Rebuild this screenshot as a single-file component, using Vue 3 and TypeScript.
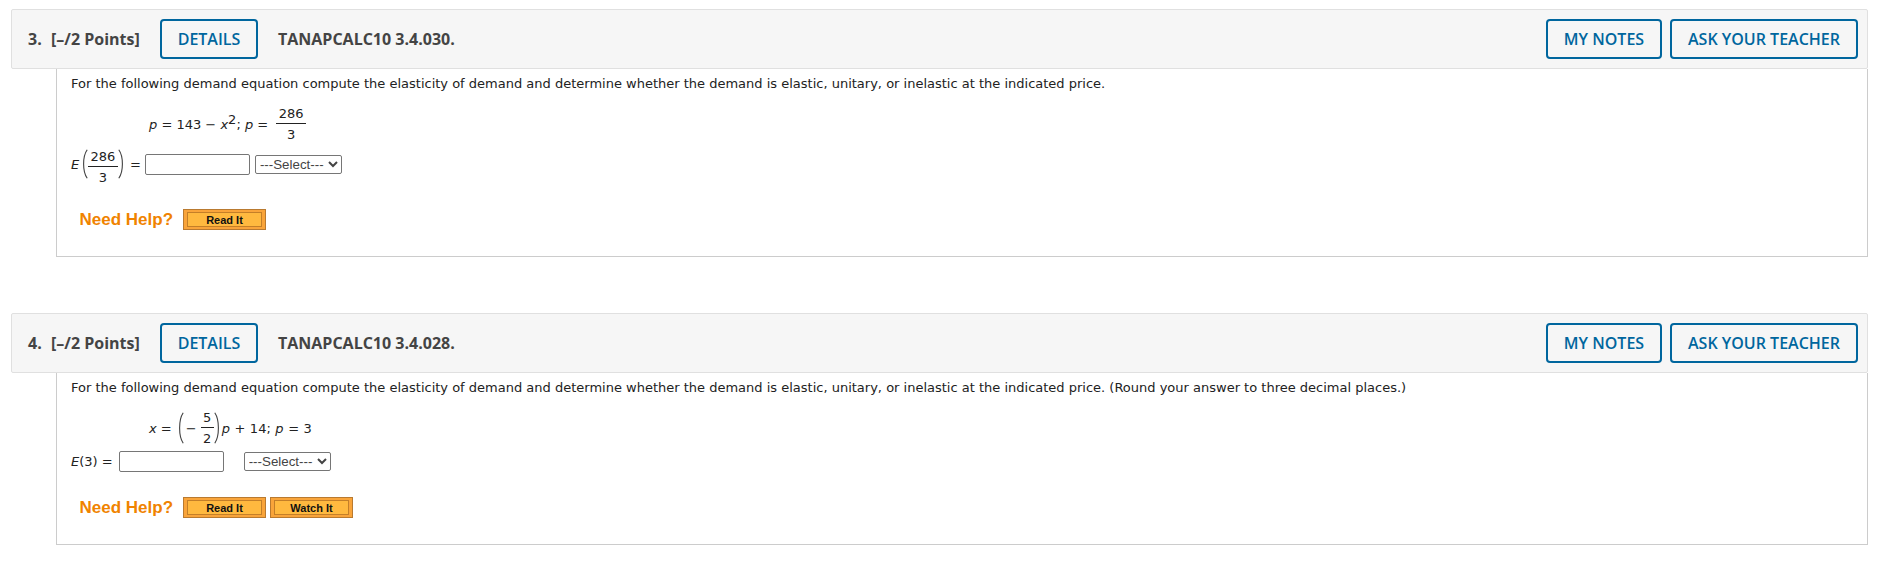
<script setup lang="ts">
const parenLeft = 'M9 1 C3 10 3 30 9 39'
const parenRight = 'M1 1 C7 10 7 30 1 39'
</script>

<template>
  <div class="page">
    <section class="question first">
      <header class="q-head">
        <span class="q-num">3.</span>
        <span class="q-points">[–/2 Points]</span>
        <button class="outline details">DETAILS</button>
        <span class="q-title">TANAPCALC10 3.4.030.</span>
        <button class="outline notes">MY NOTES</button>
        <button class="outline ask">ASK YOUR TEACHER</button>
      </header>
      <div class="q-body">
        <p class="prompt">For the following demand equation compute the elasticity of demand and determine whether the demand is elastic, unitary, or inelastic at the indicated price.</p>
        <div class="equation">
          <span><i>p</i>&nbsp;= 143 − <i>x</i><sup>2</sup>; <i>p</i>&nbsp;=</span>
          <span class="frac gap"><span>286</span><span>3</span></span>
        </div>
        <div class="answer">
          <i class="fn">E</i>
          <svg class="paren" width="8" height="30" viewBox="0 0 10 40" preserveAspectRatio="none"><path :d="parenLeft" /></svg>
          <span class="frac"><span>286</span><span>3</span></span>
          <svg class="paren" width="8" height="30" viewBox="0 0 10 40" preserveAspectRatio="none"><path :d="parenRight" /></svg>
          <span class="equals">=</span>
          <input class="num-input" type="text" />
          <select class="pick"><option>---Select---</option></select>
        </div>
        <div class="help">
          <span class="help-label">Need Help?</span>
          <button class="orange"><span>Read It</span></button>
        </div>
      </div>
    </section>

    <section class="question">
      <header class="q-head">
        <span class="q-num">4.</span>
        <span class="q-points">[–/2 Points]</span>
        <button class="outline details">DETAILS</button>
        <span class="q-title">TANAPCALC10 3.4.028.</span>
        <button class="outline notes">MY NOTES</button>
        <button class="outline ask">ASK YOUR TEACHER</button>
      </header>
      <div class="q-body second">
        <p class="prompt">For the following demand equation compute the elasticity of demand and determine whether the demand is elastic, unitary, or inelastic at the indicated price. (Round your answer to three decimal places.)</p>
        <div class="equation">
          <span><i>x</i>&nbsp;=</span>
          <svg class="paren open" width="8" height="32" viewBox="0 0 10 40" preserveAspectRatio="none"><path :d="parenLeft" /></svg>
          <span class="minus">−</span>
          <span class="frac small"><span>5</span><span>2</span></span>
          <svg class="paren" width="8" height="32" viewBox="0 0 10 40" preserveAspectRatio="none"><path :d="parenRight" /></svg>
          <span class="tail"><i>p</i>&nbsp;+ 14; <i>p</i>&nbsp;= 3</span>
        </div>
        <div class="answer plain">
          <span><i>E</i>(3) =</span>
          <input class="num-input" type="text" />
          <select class="pick spaced"><option>---Select---</option></select>
        </div>
        <div class="help close">
          <span class="help-label">Need Help?</span>
          <button class="orange"><span>Read It</span></button>
          <button class="orange"><span>Watch It</span></button>
        </div>
      </div>
    </section>
  </div>
</template>

<style>
html, body {
  background: #fff;
}
</style>

<style scoped>
.page {
  width: 1857px;
  padding: 9px 0 0 11px;
  font-family: "DejaVu Sans", Verdana, sans-serif;
  font-size: 13px;
  color: #222;
}

.first {
  margin-bottom: 56px;
}

.q-head {
  display: flex;
  align-items: center;
  height: 60px;
  box-sizing: border-box;
  padding: 0 9px 0 16px;
  background: #f6f6f6;
  border: 1px solid #e0e0e0;
  border-radius: 2px;
  font-family: "Open Sans", sans-serif;
  font-weight: 700;
  font-size: 16px;
  color: #444;
}

.q-num {
  width: 23px;
}

.q-points {
  width: 109px;
}

.q-title {
  margin-left: 20px;
  margin-right: auto;
}

.outline {
  height: 40px;
  box-sizing: border-box;
  background: transparent;
  border: 2px solid #00669e;
  border-radius: 4px;
  color: #00669e;
  font-family: "Open Sans", sans-serif;
  font-weight: 600;
  font-size: 16px;
  padding: 0;
}

.details {
  width: 98px;
}

.notes {
  width: 116px;
  margin-right: 8px;
}

.ask {
  width: 188px;
}

.q-body {
  margin-left: 45px;
  height: 188px;
  box-sizing: border-box;
  padding: 7px 14px 0;
  border: 1px solid #ccc;
  border-top: none;
  background: #fff;
}

.second {
  height: 172px;
}

.prompt {
  margin: 0;
  line-height: 16px;
}

.equation {
  display: flex;
  align-items: center;
  height: 34px;
  margin: 15px 0 0 78px;
  white-space: pre;
}

.equation sup {
  font-size: 13px;
  line-height: 0;
  vertical-align: 5px;
}

.frac {
  display: inline-flex;
  flex-direction: column;
  align-items: center;
  width: 30px;
  line-height: 15px;
}

.frac span:first-child {
  border-bottom: 1px solid #222;
  width: 100%;
  text-align: center;
  padding-bottom: 2px;
}

.frac span:last-child {
  padding-top: 3px;
}

.frac.gap {
  margin-left: 8px;
}

.frac.small {
  width: 13px;
  margin-left: 4px;
}

.minus {
  margin-left: 2px;
}

.tail {
  word-spacing: 0.4px;
}

.paren {
  flex: none;
  fill: none;
  stroke: #444;
  stroke-width: 1.4;
}

.paren.open {
  margin-left: 4px;
}

.answer {
  display: flex;
  align-items: center;
  height: 34px;
  margin-top: 6px;
}

.answer .frac {
  margin-top: 6px;
}

.answer.plain {
  height: 22px;
  margin-top: 5px;
}

.fn {
  width: 9px;
}

.equals {
  margin: 0 4px;
}

.num-input {
  width: 105px;
  height: 21px;
  box-sizing: border-box;
  border: 1px solid #767676;
  border-radius: 2px;
  padding: 0 4px;
  margin: 0;
  background: #fff;
}

.plain .num-input {
  margin-left: 6px;
}

.pick {
  width: 87px;
  height: 19px;
  box-sizing: border-box;
  margin: 0 0 0 5px;
  padding: 0;
  background: #fff;
  border: 1px solid #767676;
  border-radius: 2px;
  font-family: "Liberation Sans", Arial, sans-serif;
  font-size: 13.33px;
  color: #444;
}

.pick.spaced {
  margin-left: 20px;
}

.help {
  display: flex;
  align-items: center;
  gap: 4px;
  margin: 28px 0 0 8.5px;
}

.help.close {
  margin-top: 25px;
}

.help-label {
  width: 99.5px;
  font-family: "Liberation Sans", Arial, sans-serif;
  font-weight: 700;
  font-size: 17px;
  color: #f08300;
}

.orange {
  width: 83px;
  height: 21px;
  padding: 2px 3px;
  box-sizing: border-box;
  background: #f9a43a;
  border: 1px solid #b97a30;
  font-family: "Liberation Sans", Arial, sans-serif;
  font-weight: 700;
  font-size: 11px;
  color: #111;
}

.orange span {
  display: block;
  height: 15px;
  box-sizing: border-box;
  line-height: 15px;
  background: #ffb93f;
  border: 1px solid #c47f28;
}
</style>
